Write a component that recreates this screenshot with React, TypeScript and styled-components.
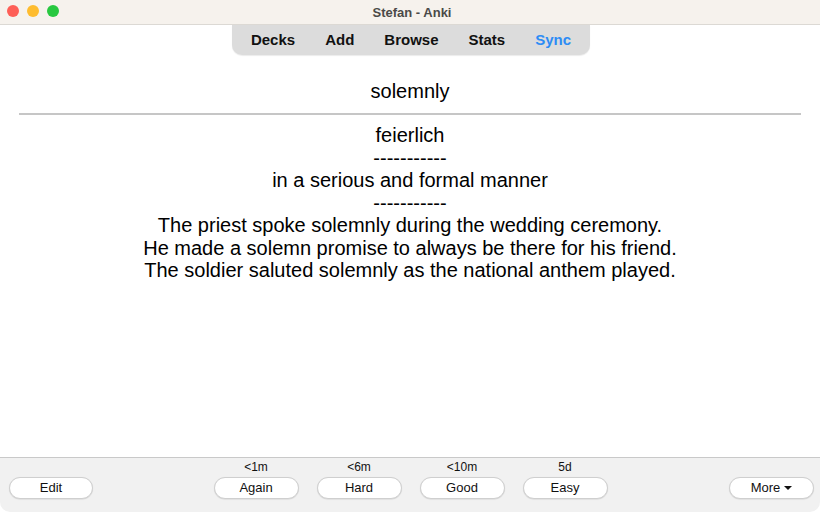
import React from "react";
import styled, { createGlobalStyle } from "styled-components";

const Global = createGlobalStyle`
  html, body { margin: 0; padding: 0; background: #ffffff; }
  body { font-family: "Liberation Sans", Arial, sans-serif; }
  #root { width: 820px; height: 512px; }
`;

const Window = styled.div`
  width: 820px;
  height: 512px;
  display: flex;
  flex-direction: column;
  background: #ffffff;
  overflow: hidden;
`;

const TitleBar = styled.div`
  height: 25px;
  flex: 0 0 25px;
  box-sizing: border-box;
  background: #f6f2ed;
  border-bottom: 1px solid #dcd9d4;
  position: relative;
  display: flex;
  align-items: center;
  justify-content: center;
`;

const Lights = styled.div`
  position: absolute;
  left: 7px;
  top: 5px;
  display: flex;
  gap: 8px;
`;

const Light = styled.span<{ $c: string }>`
  width: 12px;
  height: 12px;
  border-radius: 50%;
  background: ${(p) => p.$c};
`;

const Title = styled.div`
  font-size: 13px;
  font-weight: bold;
  color: #4b4a48;
  margin-left: 4px;
`;

const ToolbarRow = styled.div`
  display: flex;
  justify-content: center;
  flex: 0 0 auto;
  padding-left: 2px;
`;

const Toolbar = styled.nav`
  display: flex;
  align-items: center;
  gap: 30px;
  height: 30px;
  box-sizing: border-box;
  padding: 0 19px 2px;
  background: #dcdcdc;
  border-radius: 0 0 10px 10px;
  box-shadow: 0 1px 1px rgba(0, 0, 0, 0.08);
`;

const NavItem = styled.span<{ $active?: boolean }>`
  font-size: 15px;
  font-weight: bold;
  color: ${(p) => (p.$active ? "#2d8cf5" : "#111111")};
`;

const Card = styled.main`
  flex: 1;
  padding: 25px 19px 0;
  text-align: center;
  font-size: 20px;
  line-height: 23px;
  color: #000;
`;

const Rule = styled.hr`
  margin: 10px 0 9px;
  border: none;
  height: 2px;
  background: #c6c6c6;
`;

const Answer = styled.div`
  line-height: 22.5px;
`;

const BottomBar = styled.footer`
  flex: 0 0 55px;
  height: 55px;
  box-sizing: border-box;
  border-top: 1px solid #c9c9c9;
  background: #f1f1f1;
  display: grid;
  grid-template-columns: 1fr auto 1fr;
  align-items: start;
  padding: 0 6px 0 7px;
  border-radius: 0 0 10px 10px;
`;

const Side = styled.div<{ $right?: boolean }>`
  display: flex;
  justify-content: ${(p) => (p.$right ? "flex-end" : "flex-start")};
  padding-top: 19px;
  padding-left: ${(p) => (p.$right ? "0" : "2px")};
`;

const Answers = styled.div`
  display: flex;
  gap: 18px;
`;

const AnswerCol = styled.div`
  display: flex;
  flex-direction: column;
  align-items: center;
`;

const Due = styled.div`
  font-size: 12px;
  line-height: 14px;
  height: 14px;
  margin: 2px 0 3px;
  color: #111;
`;

const Button = styled.button<{ $w?: number }>`
  width: ${(p) => p.$w ?? 85}px;
  height: 22px;
  box-sizing: border-box;
  border: 1px solid #cfcfcf;
  border-radius: 11px;
  background: #ffffff;
  box-shadow: 0 0.5px 1px rgba(0, 0, 0, 0.12);
  font-family: "Liberation Sans", Arial, sans-serif;
  font-size: 13px;
  color: #111;
  padding: 0 0 1px;
  display: flex;
  align-items: center;
  justify-content: center;
  gap: 4px;
`;

const Caret = styled.span`
  width: 0;
  height: 0;
  border-left: 4px solid transparent;
  border-right: 4px solid transparent;
  border-top: 4px solid #111;
  margin-top: 1px;
`;

const answers = [
  { due: "<1m", label: "Again" },
  { due: "<6m", label: "Hard" },
  { due: "<10m", label: "Good" },
  { due: "5d", label: "Easy" },
];

export default function App() {
  return (
    <>
      <Global />
      <Window>
        <TitleBar>
          <Lights>
            <Light $c="#fe5f57" />
            <Light $c="#febc2e" />
            <Light $c="#28c840" />
          </Lights>
          <Title>Stefan - Anki</Title>
        </TitleBar>
        <ToolbarRow>
          <Toolbar>
            <NavItem>Decks</NavItem>
            <NavItem>Add</NavItem>
            <NavItem>Browse</NavItem>
            <NavItem>Stats</NavItem>
            <NavItem $active>Sync</NavItem>
          </Toolbar>
        </ToolbarRow>
        <Card>
          <div>solemnly</div>
          <Rule />
          <Answer>
            feierlich
            <br />
            -----------
            <br />
            in a serious and formal manner
            <br />
            -----------
            <br />
            The priest spoke solemnly during the wedding ceremony.
            <br />
            He made a solemn promise to always be there for his friend.
            <br />
            The soldier saluted solemnly as the national anthem played.
          </Answer>
        </Card>
        <BottomBar>
          <Side>
            <Button $w={84}>Edit</Button>
          </Side>
          <Answers>
            {answers.map((a) => (
              <AnswerCol key={a.label}>
                <Due>{a.due}</Due>
                <Button>{a.label}</Button>
              </AnswerCol>
            ))}
          </Answers>
          <Side $right>
            <Button>
              More <Caret />
            </Button>
          </Side>
        </BottomBar>
      </Window>
    </>
  );
}
